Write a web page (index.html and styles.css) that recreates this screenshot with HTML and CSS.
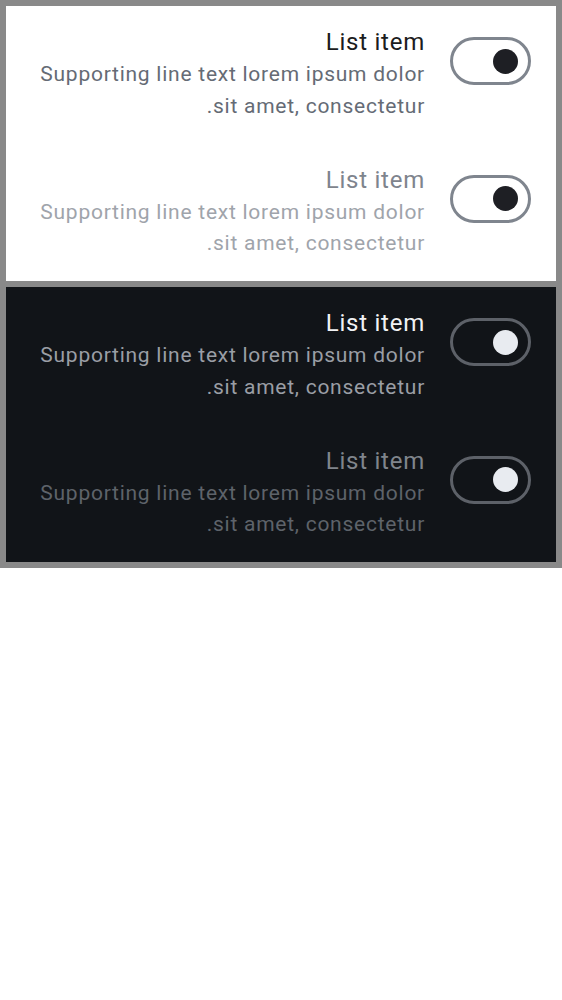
FILE: index.html
```html
<!DOCTYPE html>
<html lang="en">
<head>
<meta charset="utf-8">
<title>List items with switches</title>
<link rel="stylesheet" href="styles.css">
</head>
<body>
<div class="frame">
  <section class="panel panel-light">
    <div class="item">
      <div class="text">
        <div class="title">List item</div>
        <div class="support">Supporting line text lorem ipsum dolor sit amet, consectetur.</div>
      </div>
      <div class="switch"><span class="thumb"></span></div>
    </div>
    <div class="item item-disabled">
      <div class="text">
        <div class="title">List item</div>
        <div class="support">Supporting line text lorem ipsum dolor sit amet, consectetur.</div>
      </div>
      <div class="switch"><span class="thumb"></span></div>
    </div>
  </section>
  <section class="panel panel-dark">
    <div class="item">
      <div class="text">
        <div class="title">List item</div>
        <div class="support">Supporting line text lorem ipsum dolor sit amet, consectetur.</div>
      </div>
      <div class="switch"><span class="thumb"></span></div>
    </div>
    <div class="item item-disabled">
      <div class="text">
        <div class="title">List item</div>
        <div class="support">Supporting line text lorem ipsum dolor sit amet, consectetur.</div>
      </div>
      <div class="switch"><span class="thumb"></span></div>
    </div>
  </section>
</div>
</body>
</html>
```
FILE: styles.css
```css
* { box-sizing: border-box; }

html, body {
  margin: 0;
  padding: 0;
  background: #ffffff;
}

body {
  font-family: Roboto, "Liberation Sans", sans-serif;
}

.frame {
  display: grid;
  gap: 6px;
  padding: 6px;
  background: #898989;
  width: 562px;
}

.panel {
  display: flex;
  flex-direction: column;
  height: 275px;
}

.panel-light { background: #ffffff; }
.panel-dark { background: #111418; }

.item {
  display: flex;
  align-items: flex-start;
  gap: 25px;
  height: 137.5px;
  padding: 20px 25px 0 24px;
}

.text {
  flex: 1;
  direction: rtl;
  text-align: right;
}

.title {
  font-size: 24px;
  line-height: 33px;
  letter-spacing: 0.75px;
}

.support {
  font-size: 21px;
  line-height: 31.5px;
  letter-spacing: 0.75px;
}

.switch {
  flex: none;
  width: 81px;
  height: 48px;
  margin-top: 11px;
  border: 3px solid;
  border-radius: 24px;
  display: flex;
  align-items: center;
  justify-content: flex-end;
  padding-right: 10px;
}

.thumb {
  width: 25px;
  height: 25px;
  border-radius: 50%;
}

/* light theme */
.panel-light .title { color: #1b1c20; }
.panel-light .support { color: #656b75; }
.panel-light .item-disabled .title { color: #7e848d; }
.panel-light .item-disabled .support { color: #9fa4ab; }
.panel-light .switch { border-color: #7f858e; }
.panel-light .thumb { background: #1e1f24; }

/* dark theme */
.panel-dark .title { color: #f1f2f4; }
.panel-dark .support { color: #9a9ea5; }
.panel-dark .item-disabled .title { color: #80858c; }
.panel-dark .item-disabled .support { color: #5e636a; }
.panel-dark .switch { border-color: #5d6168; }
.panel-dark .thumb { background: #e8ebf0; }
```
